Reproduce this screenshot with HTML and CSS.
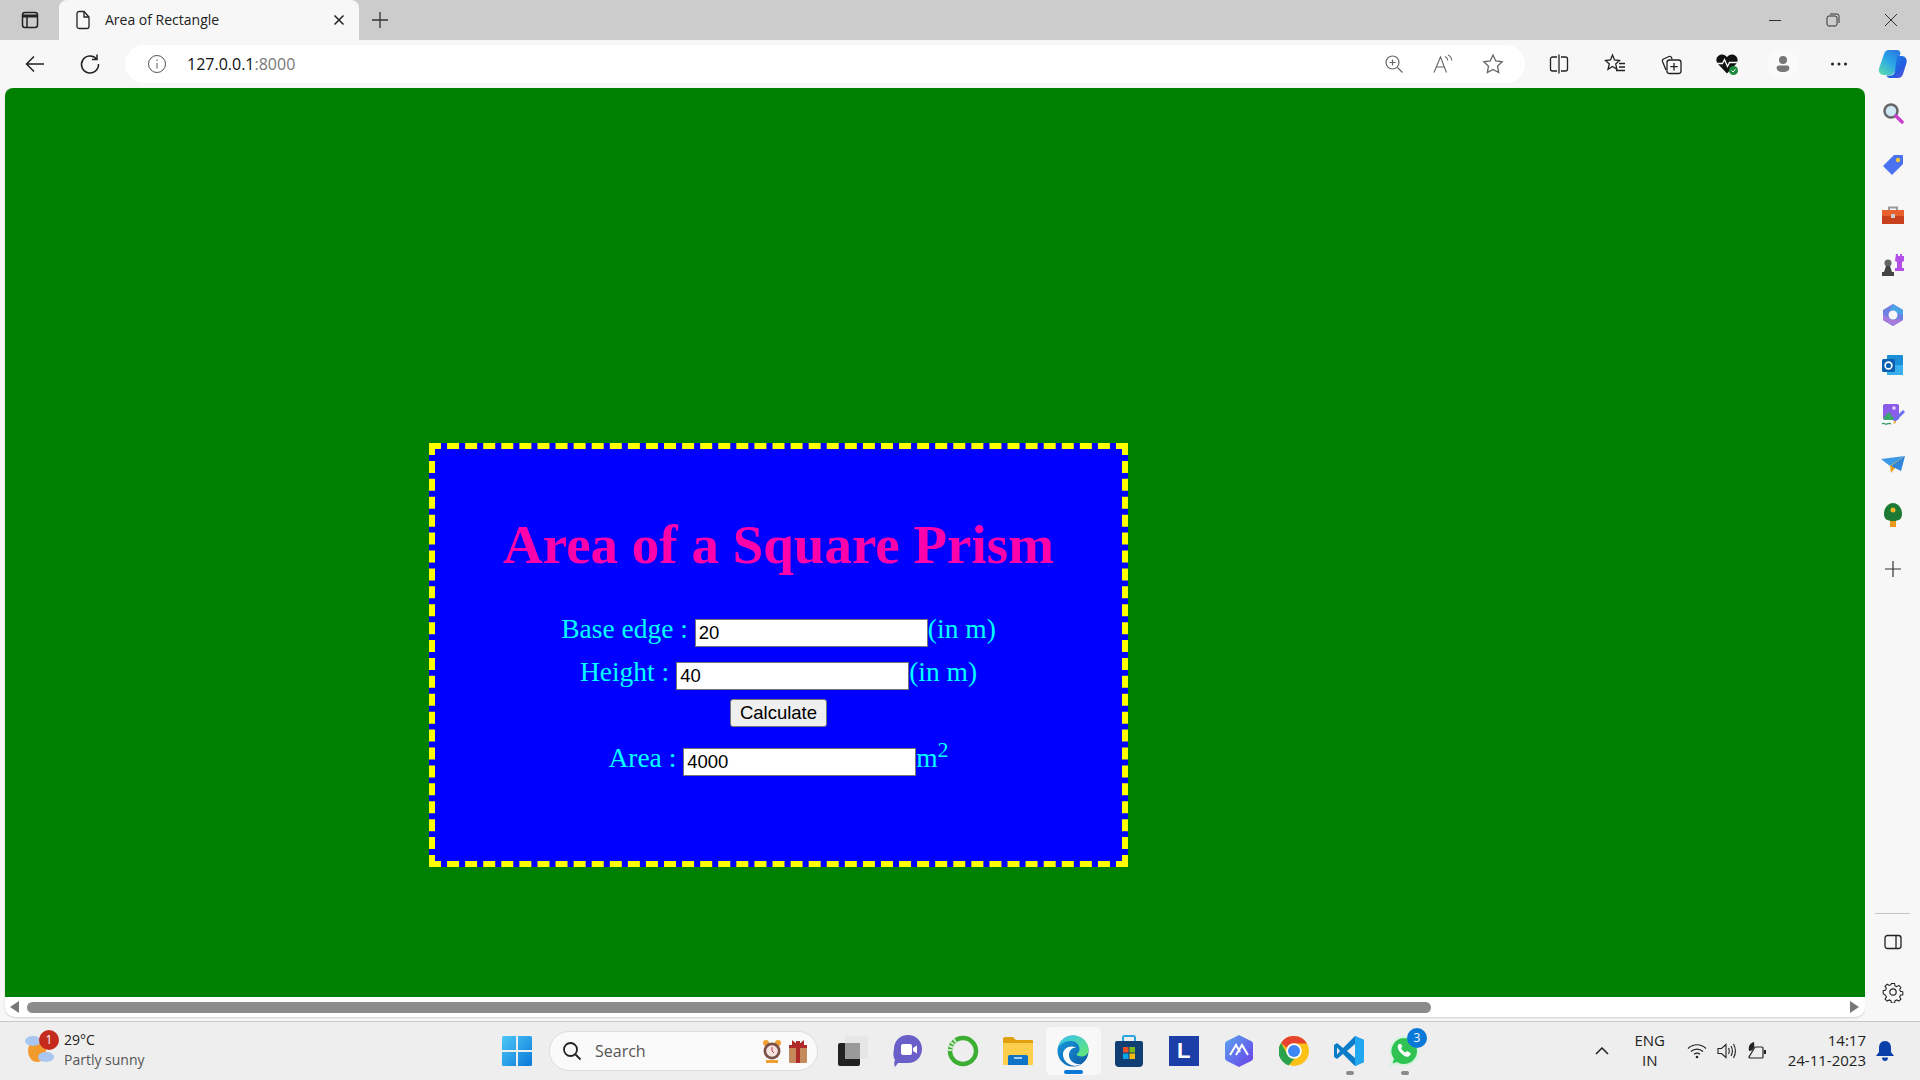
FILE: index.html
```html
<!DOCTYPE html>
<html lang="en">
<head>
    <meta charset="UTF-8">
    <meta name="viewport" content="width=device-width, initial-scale=1.0">
    <title>Area of Rectangle</title>
    <link rel="stylesheet" href="styles.css">
</head>
<body>
    <!-- tab strip -->
    <div class="tabstrip">
        <div class="tab-toggle">
            <svg width="20" height="20" viewBox="0 0 20 20" fill="none" stroke="#222" stroke-width="1.5"><rect x="2.5" y="2.5" width="15" height="15" rx="2.5"/><path d="M2.5 6h15" stroke-width="3"/><path d="M7 6v11"/></svg>
        </div>
        <div class="tab">
            <svg width="16" height="20" viewBox="0 0 16 20" fill="none" stroke="#222" stroke-width="1.3"><path d="M2 3.5a2 2 0 0 1 2-2h5l5 5.5v9.5a2 2 0 0 1-2 2H4a2 2 0 0 1-2-2z"/><path d="M9 1.5V7h5"/></svg>
            <span class="tab-title">Area of Rectangle</span>
            <svg class="tab-close" width="12" height="12" viewBox="0 0 12 12" stroke="#222" stroke-width="1.5"><path d="M1.5 1.5l9 9M10.5 1.5l-9 9"/></svg>
        </div>
        <svg class="tab-new" width="18" height="18" viewBox="0 0 18 18" stroke="#333" stroke-width="1.3"><path d="M9 1v16M1 9h16"/></svg>
        <div class="win-controls">
            <svg width="14" height="14" viewBox="0 0 14 14" stroke="#333"><path d="M1 7.5h12"/></svg>
            <svg width="14" height="14" viewBox="0 0 14 14" fill="none" stroke="#333"><rect x="1" y="3" width="10" height="10" rx="2"/><path d="M4 1h7a2 2 0 0 1 2 2v7"/></svg>
            <svg width="14" height="14" viewBox="0 0 14 14" stroke="#333"><path d="M1 1l12 12M13 1L1 13"/></svg>
        </div>
    </div>

    <!-- address bar and toolbar -->
    <div class="toolbar">
        <svg class="nav-back" width="22" height="22" viewBox="0 0 22 22" fill="none" stroke="#222" stroke-width="1.5"><path d="M20 11H3M10 3.5L2.5 11l7.5 7.5"/></svg>
        <svg class="nav-reload" width="22" height="22" viewBox="0 0 22 22" fill="none" stroke="#222" stroke-width="1.5"><path d="M17.5 6A8.5 8.5 0 1 0 19.5 11"/><path d="M18 1.500V6.500h-5"/></svg>
        <div class="address">
            <svg class="addr-info" width="20" height="20" viewBox="0 0 20 20" fill="none" stroke="#555" stroke-width="1"><circle cx="10" cy="10" r="8.5"/><path d="M10 9v5.5M10 5.5V7"/></svg>
            <span class="url">127.0.0.1<span class="url-port">:8000</span></span>
            <div class="addr-icons">
                <svg width="20" height="20" viewBox="0 0 20 20" fill="none" stroke="#666" stroke-width="1.2"><circle cx="8.5" cy="8.5" r="6.5"/><path d="M13.5 13.5l5 5M8.5 5.5v6M5.5 8.5h6"/></svg>
                <svg width="22" height="20" viewBox="0 0 22 20" fill="none" stroke="#666" stroke-width="1.1"><path d="M2 18.5L8.5 3l6 15.5M4.5 13h8"/><path d="M13 2.5c1.500.5 2.500 2 2.800 4M16 1c2 .8 3.500 3 3.800 5.500"/></svg>
                <svg width="22" height="22" viewBox="0 0 22 22" fill="none" stroke="#666" stroke-width="1.3"><path d="M11 2l2.800 6 6.400.8-4.700 4.400 1.200 6.400L11 16.500l-5.700 3.100 1.200-6.400L1.800 8.800 8.200 8z"/></svg>
            </div>
        </div>
        <div class="tool-icons">
            <svg width="20" height="20" viewBox="0 0 20 20" fill="none" stroke="#222" stroke-width="1.3"><path d="M8 3H3.500a2 2 0 0 0-2 2v10a2 2 0 0 0 2 2H8M12 3h4.500a2 2 0 0 1 2 2v10a2 2 0 0 1-2 2H12M10 .5v19"/></svg>
            <svg width="22" height="22" viewBox="0 0 22 22" fill="none" stroke="#222" stroke-width="1.3"><path d="M8.500 2l2 5 5 .5-3.800 3.500 1.200 5.300-4.400-2.800L4 16.300 5.300 11 1.500 7.500l5-.5z"/><path d="M15 10.500h6M15 14h6M12 17.500h9"/></svg>
            <svg width="22" height="22" viewBox="0 0 22 22" fill="none" stroke="#222" stroke-width="1.3"><path d="M6 17L2.500 8.500a2 2 0 0 1 1-2.500L9 3.500a2 2 0 0 1 2.500 1L12 6"/><rect x="7" y="7" width="14" height="13.5" rx="2.5"/><path d="M14 10v7.500M10.300 13.700h7.400"/></svg>
            <svg width="24" height="24" viewBox="0 0 24 24"><path d="M12 21.500L2.500 11.500C-.5 7 3 2.500 7 2.500c2 0 3.800 1 5 2.800 1.200-1.800 3-2.800 5-2.800 4 0 7.500 4.500 4.500 9z" fill="#111"/><path d="M1.500 11.500h6l2-4 3 7 2-4h8" fill="none" stroke="#fff" stroke-width="1.3"/><circle cx="18.5" cy="18.5" r="4.5" fill="#1c8a3c"/><path d="M16.500 18.500l1.500 1.500 2.500-2.800" fill="none" stroke="#fff" stroke-width="1"/></svg>
            <div class="profile">
                <svg width="16" height="18" viewBox="0 0 20 22" fill="#777"><circle cx="10" cy="6" r="5"/><path d="M2 16a3 3 0 0 1 3-3h10a3 3 0 0 1 3 3c0 3-3 5-8 5s-8-2-8-5z"/></svg>
            </div>
            <svg width="18" height="6" viewBox="0 0 18 6" fill="#222"><circle cx="2.5" cy="3" r="1.5"/><circle cx="9" cy="3" r="1.5"/><circle cx="15.500" cy="3" r="1.5"/></svg>
        </div>
        <svg class="copilot" width="30" height="30" viewBox="0 0 30 30">
            <defs>
                <linearGradient id="copA" x1="0" y1="1" x2="0.7" y2="0"><stop offset="0" stop-color="#5fe0a8"/><stop offset="0.6" stop-color="#2aa6e8"/><stop offset="1" stop-color="#2b7de0"/></linearGradient>
                <linearGradient id="copB" x1="0" y1="0" x2="1" y2="1"><stop offset="0" stop-color="#1f8fe8"/><stop offset="0.6" stop-color="#1f5fe0"/><stop offset="1" stop-color="#6a4fe0"/></linearGradient>
            </defs>
            <path d="M11 1h8c2 0 3 1.200 3.500 3L17 22c-.8 2.500-2.500 4-5 4H6c-4 0-6-3-4.800-7L6 5c.8-2.500 2.500-4 5-4z" fill="url(#copA)"/>
            <path d="M19 7h5c3 0 5.500 3 4.500 7l-3.500 11c-.8 2.500-2.500 4-5 4h-8c-2 0-3-1-3.500-2.500h4c2 0 3.500-1 4.200-3z" fill="url(#copB)"/>
        </svg>
    </div>

    <div class="middle">
        <div class="viewport">
            <!-- the page being viewed -->
            <div class="page">
                <div class="card">
                    <h1>Area of a Square Prism</h1>
                    <div class="row">Base edge : <input class="field" type="text" value="20">(in m)</div>
                    <div class="row">Height : <input class="field" type="text" value="40">(in m)</div>
                    <div class="row-btn"><button class="calc">Calculate</button></div>
                    <div class="row">Area : <input class="field" type="text" value="4000">m<sup>2</sup></div>
                </div>
            </div>
            <div class="hscroll">
                <svg width="9" height="12" viewBox="0 0 9 12" fill="#777"><path d="M9 0v12L0 6z"/></svg>
                <div class="hscroll-track"><div class="hscroll-thumb"></div></div>
                <svg width="9" height="12" viewBox="0 0 9 12" fill="#777"><path d="M0 0v12l9-6z"/></svg>
            </div>
        </div>

        <div class="sidebar">
            <div class="side-icons">
                <svg width="22" height="22" viewBox="0 0 22 22"><circle cx="9" cy="9" r="6.5" fill="#cfe6f5" stroke="#666" stroke-width="2.5"/><path d="M14 14l6 6" stroke="#c93fd0" stroke-width="3.5" stroke-linecap="round"/></svg>
                <svg width="22" height="22" viewBox="0 0 22 22"><path d="M12 1h8a1 1 0 0 1 1 1v8L10 21 1 12z" fill="#4a72f0"/><circle cx="16" cy="6" r="2.2" fill="#f3c43a"/></svg>
                <svg width="24" height="20" viewBox="0 0 24 20"><path d="M8 5V2.500h8V5" fill="none" stroke="#9a9a9a" stroke-width="2"/><rect x="1" y="5" width="22" height="6" fill="#e8602c"/><rect x="1" y="11" width="22" height="8" fill="#c8401c"/><rect x="10" y="9" width="4" height="4" fill="#ccc"/></svg>
                <svg width="24" height="24" viewBox="0 0 24 24"><path d="M15 1h2v2h2V1h2v2h2v5l-2 1v6h2v3h-9v-3h2V9l-2-1z" fill="#b44fe8"/><circle cx="7" cy="10" r="3.5" fill="#666"/><path d="M5 13h4l2 6h2v4H1v-4h2z" fill="#444"/></svg>
                <svg width="22" height="24" viewBox="0 0 22 24"><path d="M11 1l10 6v10l-10 6-10-6V7z" fill="#6d7fe0"/><path d="M11 1l10 6v5l-6-2a6 6 0 0 0-8-2z" fill="#4ba3e8"/><path d="M1 12l6 3a6 6 0 0 0 8 1l6 1-10 6-10-6z" fill="#a77bdc"/><circle cx="11" cy="12" r="4.5" fill="#f7f7f7"/></svg>
                <svg width="22" height="22" viewBox="0 0 22 22"><rect x="5" y="1" width="16" height="20" rx="1" fill="#1a8fd8"/><path d="M5 11h16v10H5z" fill="#38b0ee"/><rect x="0" y="5" width="13" height="13" rx="1.5" fill="#0a60b0"/><circle cx="6.5" cy="11.5" r="3.4" fill="none" stroke="#fff" stroke-width="1.6"/></svg>
                <svg width="24" height="24" viewBox="0 0 24 24"><rect x="2" y="1" width="16" height="16" rx="2" fill="#8a5ce8"/><path d="M2 15l6-6 6 8H4z" fill="#3aa86a"/><circle cx="13" cy="5" r="1.8" fill="#e8d8ff"/><path d="M23 8L13 18" stroke="#6a6cf0" stroke-width="3"/><path d="M14 17l-2 4 3-1z" fill="#f0b429"/><path d="M1 21c2-2 3 1 5 0s2-1 4 0" fill="none" stroke="#2e9a66" stroke-width="1.3"/></svg>
                <svg width="24" height="18" viewBox="0 0 24 18"><path d="M0 3L24 0 9 10z" fill="#3b9ae8"/><path d="M24 0L9 10l1 7z" fill="#f0a020"/><path d="M24 0L20 15 10 10z" fill="#2f86dc"/></svg>
                <svg width="20" height="24" viewBox="0 0 20 24"><rect x="7" y="17" width="6" height="7" fill="#e89a1c"/><path d="M10 0c5 0 9 5 9 11 0 5-3 7-9 7s-9-2-9-7C1 5 5 0 10 0z" fill="#1d7a34"/><circle cx="10" cy="7" r="2.5" fill="#f0b429"/></svg>
                <svg width="16" height="16" viewBox="0 0 16 16" stroke="#333" stroke-width="1.2"><path d="M8 0v16M0 8h16"/></svg>
            </div>
            <div class="side-bottom">
                <div class="side-line"></div>
                <svg width="18" height="16" viewBox="0 0 18 16" fill="none" stroke="#222" stroke-width="1.3"><rect x="1" y="1.5" width="16" height="13" rx="2.5"/><path d="M12 1.500v13"/></svg>
                <svg width="22" height="22" viewBox="0 0 22 22" fill="none" stroke="#222" stroke-width="1.2"><circle cx="11" cy="11" r="3.2"/><path d="M9.300 1.500h3.400l.6 2.700 1.800.8 2.400-1.400 2.300 2.400-1.400 2.300.8 1.900 2.700.6v3.300l-2.700.6-.8 1.800 1.400 2.400-2.300 2.300-2.400-1.400-1.800.8-.6 2.700H9.300l-.6-2.700-1.800-.8-2.400 1.400-2.300-2.300 1.400-2.400-.8-1.800L.1 12.800V9.500l2.700-.6.800-1.900-1.400-2.300 2.300-2.400 2.400 1.400 1.800-.8z" transform="translate(1.1 1.1) scale(.9)"/></svg>
            </div>
        </div>
    </div>

    <!-- windows taskbar -->
    <div class="taskbar">
        <div class="weather">
            <div class="weather-icon">
                <svg width="34" height="36" viewBox="0 0 34 36"><ellipse cx="13" cy="18" rx="9" ry="11" fill="#f39a2c"/><ellipse cx="9" cy="8" rx="8" ry="5" fill="#a9c6ee"/><ellipse cx="22" cy="24" rx="8" ry="5" fill="#a9c6ee"/></svg>
                <span class="weather-badge">1</span>
            </div>
            <div class="weather-text">
                <div class="temp">29°C</div>
                <div class="cond">Partly sunny</div>
            </div>
        </div>
        <div class="task-center">
            <svg class="win-logo" width="30" height="30" viewBox="0 0 30 30">
                <defs><linearGradient id="winG" x1="0" y1="0" x2="1" y2="1"><stop offset="0" stop-color="#4dc8f8"/><stop offset="1" stop-color="#0a78d8"/></linearGradient></defs>
                <path d="M0 1.500A1.500 1.500 0 0 1 1.500 0H14v14H0zM16 0h12.500A1.500 1.500 0 0 1 30 1.500V14H16zM0 16h14v14H1.500A1.500 1.500 0 0 1 0 28.500zM16 16h14v12.500a1.500 1.500 0 0 1-1.500 1.500H16z" fill="url(#winG)"/>
            </svg>
            <div class="search">
                <svg width="20" height="20" viewBox="0 0 20 20" fill="none" stroke="#222" stroke-width="1.8"><circle cx="8.5" cy="8.5" r="6.5"/><path d="M13.5 13.5l5 5"/></svg>
                <span class="search-text">Search</span>
                <div class="search-art">
                    <svg width="20" height="24" viewBox="0 0 20 24"><circle cx="4" cy="4" r="3" fill="#f0a030"/><circle cx="16" cy="4" r="3" fill="#f0a030"/><circle cx="10" cy="12" r="8.5" fill="#7a5248"/><circle cx="10" cy="12" r="5.8" fill="#f3e4e0"/><path d="M10 8v4l2 2" stroke="#c0304a" fill="none"/><path d="M4 21h12v3H4z" fill="#f0a030"/></svg>
                    <svg width="20" height="24" viewBox="0 0 20 24"><rect x="1" y="6" width="18" height="18" rx="1" fill="#c48a5c"/><rect x="8" y="2" width="4" height="22" fill="#b02a2a"/><path d="M1 6h18v3H1zM4 1l6 5 6-5v5H4z" fill="#b02a2a"/></svg>
                </div>
            </div>
            <div class="task-icons">
                <div class="task-item">
                    <svg width="32" height="32" viewBox="0 0 32 32"><rect x="1" y="8" width="22" height="23" rx="2" fill="#222"/><rect x="8" y="1" width="23" height="23" rx="2" fill="#e4e4e4" fill-opacity=".85"/><rect x="8" y="8" width="15" height="16" fill="#9a9a9a"/></svg>
                </div>
                <div class="task-item">
                    <svg width="30" height="34" viewBox="0 0 30 34"><path d="M15 1c8 0 14 6 14 14s-6 14-14 14H5l-3 4c-1-2-1-5 0-7C0 23 0 19 1 15 1 7 7 1 15 1z" fill="#6a5fc8"/><rect x="8" y="10" width="11" height="11" rx="2" fill="#fff"/><path d="M20 14l4-2.500v8L20 17z" fill="#fff"/></svg>
                </div>
                <div class="task-item">
                    <svg width="32" height="32" viewBox="0 0 32 32" fill="none"><circle cx="16" cy="16" r="13" stroke="#3cae32" stroke-width="4.5"/><path d="M3 16a13 13 0 0 1 7-11.500" stroke="#cfe8c8" stroke-width="4.5" stroke-dasharray="2 1.5"/></svg>
                </div>
                <div class="task-item">
                    <svg width="32" height="30" viewBox="0 0 32 30"><path d="M1 3a2 2 0 0 1 2-2h8l3 3h16a1 1 0 0 1 1 1v3H1z" fill="#e0a010"/><path d="M1 7h30v21a1 1 0 0 1-1 1H2a1 1 0 0 1-1-1z" fill="#fbcf4c"/><path d="M6 21a2 2 0 0 1 2-2h16a2 2 0 0 1 2 2v8H6z" fill="#0d74c8"/><path d="M12 22h8" stroke="#d8ecf8" stroke-width="1.5"/></svg>
                </div>
                <div class="task-item task-active">
                    <svg width="32" height="32" viewBox="0 0 32 32">
                        <defs>
                            <linearGradient id="edgeA" x1="0" y1="0" x2="1" y2="1"><stop offset="0" stop-color="#1a9be0"/><stop offset="1" stop-color="#0c59a4"/></linearGradient>
                            <linearGradient id="edgeB" x1="0" y1="0" x2="1" y2="1"><stop offset="0" stop-color="#35c1f1"/><stop offset="1" stop-color="#66eb6e"/></linearGradient>
                        </defs>
                        <circle cx="16" cy="16" r="15.5" fill="url(#edgeA)"/>
                        <path d="M1 13C3 5 9 .5 16 .5 25 .5 31.500 7 31.500 15c0 4-3 6.500-7 6.500-3 0-5-1-5-2.500 2-1 3-2.500 3-5C22.500 9 18 5.500 13 6 7 6.500 3 9 1 13z" fill="url(#edgeB)"/>
                        <path d="M12 20c0-4.500 3-7.500 7-7.500-6-3-13 .5-13 7 0 5 4 10 10 11 3 .5 6 0 8-1.500-6 1-12-3-12-9z" fill="#fff"/>
                    </svg>
                    <span class="task-bar"></span>
                </div>
                <div class="task-item">
                    <svg width="30" height="32" viewBox="0 0 30 32"><path d="M9 7V2.500A1.500 1.500 0 0 1 10.500 1h9A1.500 1.500 0 0 1 21 2.500V7" fill="none" stroke="#2aa6e0" stroke-width="2"/><path d="M1 8a2 2 0 0 1 2-2h24a2 2 0 0 1 2 2v20a4 4 0 0 1-4 4H5a4 4 0 0 1-4-4z" fill="#123f73"/><rect x="9" y="12" width="5.5" height="5.5" fill="#ea4e26"/><rect x="15.5" y="12" width="5.5" height="5.5" fill="#7eb91c"/><rect x="9" y="18.5" width="5.5" height="5.5" fill="#0aa4e8"/><rect x="15.5" y="18.5" width="5.5" height="5.5" fill="#fbb90a"/></svg>
                </div>
                <div class="task-item">
                    <div class="l-tile">L</div>
                </div>
                <div class="task-item">
                    <svg width="28" height="32" viewBox="0 0 28 32"><defs><linearGradient id="arcG" x1="0" y1="0" x2="1" y2="1"><stop offset="0" stop-color="#5aa6f0"/><stop offset="1" stop-color="#6a3de8"/></linearGradient></defs><path d="M14 0l12 6a3 3 0 0 1 2 3v14a3 3 0 0 1-2 3l-12 6-12-6a3 3 0 0 1-2-3V9a3 3 0 0 1 2-3z" fill="url(#arcG)"/><path d="M5 20l6-10 4 7M11 20l6-10 6 10" fill="none" stroke="#fff" stroke-width="2"/></svg>
                </div>
                <div class="task-item">
                    <svg width="30" height="30" viewBox="0 0 30 30"><circle cx="15" cy="15" r="15" fill="#fbc116"/><path d="M15 0a15 15 0 0 1 13 7.500H15a7.500 7.500 0 0 0-7 4.500L2 7A15 15 0 0 1 15 0z" fill="#e8432e"/><path d="M2 7l6.500 11.500a7.500 7.500 0 0 0 7 4L9.500 29.500A15 15 0 0 1 2 7z" fill="#2ba24c"/><circle cx="15" cy="15" r="7.8" fill="#fff"/><circle cx="15" cy="15" r="6" fill="#3f86f5"/></svg>
                </div>
                <div class="task-item">
                    <svg width="30" height="30" viewBox="0 0 30 30"><path d="M21 0l9 4v22l-9 4L9 18l-6 5-3-2v-12l3-2 6 5z" fill="#0a7cc8"/><path d="M21 0l9 4v22l-9 4z" fill="#22a8f0"/><path d="M21 8v14l-8-7z" fill="#eee"/><path d="M3 11.500L6 15l-3 3.500z" fill="#eee"/></svg>
                    <span class="task-dot"></span>
                </div>
                <div class="task-item">
                    <svg width="30" height="30" viewBox="0 0 30 30"><path d="M15 1a14 14 0 0 1 0 28c-2.500 0-5-.7-7-2l-6 2 2-6A14 14 0 0 1 15 1z" fill="#30c354" stroke="#d4f3dc" stroke-width="2"/><path d="M10 8c-2 1.500-1.500 5 1.500 8.500s6 5 8 4 2.500-3 2-3.500l-3.500-2-1.500 1.500c-2-.8-4-3-4.500-4.500l1.500-1.500L12 8z" fill="#fff"/></svg>
                    <span class="task-dot"></span>
                    <span class="task-badge">3</span>
                </div>
            </div>
        </div>
        <div class="tray">
            <svg class="tray-up" width="14" height="8" viewBox="0 0 14 8" fill="none" stroke="#222" stroke-width="1.5"><path d="M1 7l6-6 6 6"/></svg>
            <div class="lang">ENG<br>IN</div>
            <div class="tray-icons">
                <svg width="20" height="16" viewBox="0 0 20 16" fill="none" stroke="#222" stroke-width="1.2"><path d="M1 5.500c5-5 13-5 18 0M4 8.500c3.500-3.200 8.500-3.200 12 0M7 11.300c2-1.600 4-1.600 6 0"/><circle cx="10" cy="14" r="1.3" fill="#222" stroke="none"/></svg>
                <svg width="20" height="18" viewBox="0 0 20 18" fill="none" stroke="#222" stroke-width="1.1"><path d="M1 6.500h3.500L9 2.500v13l-4.500-4H1z"/><path d="M11.500 6c1 2 1 4 0 6M14 4c1.700 3 1.700 7 0 10M16.500 2c2.500 4.500 2.500 9.500 0 14"/></svg>
                <svg width="20" height="18" viewBox="0 0 20 18"><path d="M6 16H3a1 1 0 0 1-1-1l6-10h7a1 1 0 0 1 1 1v9a1 1 0 0 1-1 1z" fill="none" stroke="#222" stroke-width="1.2"/><path d="M17 8h2v4h-2z" fill="#222"/><path d="M7 0C3 1 1 4 2 9c4 0 6-3 5-9z" fill="#222"/></svg>
            </div>
            <div class="clock">14:17<br>24-11-2023</div>
            <svg class="bell" width="18" height="20" viewBox="0 0 18 20" fill="#0a3ea8"><path d="M9 0c4 0 6 3 6 7v4l3 4H0l3-4V7c0-4 2-7 6-7z"/><path d="M6 16.500h6c0 2-1 3.500-3 3.500s-3-1.500-3-3.500z"/></svg>
        </div>
    </div>
</body>
</html>
```

FILE: styles.css
```css
* {
    box-sizing: border-box;
}
html, body {
    margin: 0;
    padding: 0;
}
body {
    width: 1920px;
    height: 1080px;
    overflow: hidden;
    display: flex;
    flex-direction: column;
    background: #f7f7f7;
    font-family: "Open Sans", "Noto Sans", sans-serif;
    color: #222;
}
svg {
    display: block;
    flex: none;
}

/* tab strip */
.tabstrip {
    height: 40px;
    flex: none;
    display: flex;
    align-items: center;
    background: #cccccc;
    padding-left: 20px;
}
.tab-toggle {
    width: 39px;
}
.tab {
    width: 300px;
    height: 40px;
    display: flex;
    align-items: center;
    background: #f7f7f7;
    border-radius: 8px 8px 0 0;
    padding-left: 16px;
}
.tab-title {
    margin-left: 14px;
    padding-bottom: 2px;
    font-size: 14px;
    white-space: nowrap;
}
.tab-close {
    margin-left: auto;
    margin-right: 14px;
}
.tab-new {
    margin-left: 12px;
}
.win-controls {
    margin-left: auto;
    display: flex;
    gap: 44px;
    padding-right: 22px;
}

/* toolbar */
.toolbar {
    height: 48px;
    flex: none;
    display: flex;
    align-items: center;
    background: #f7f7f7;
    padding-left: 24px;
}
.nav-reload {
    margin-left: 33px;
}
.address {
    width: 1400px;
    height: 38px;
    margin-left: 24px;
    display: flex;
    align-items: center;
    background: #ffffff;
    border-radius: 19px;
    padding-left: 22px;
}
.url {
    margin-left: 20px;
    font-size: 16px;
    color: #111;
}
.url-port {
    color: #777;
}
.addr-icons {
    margin-left: auto;
    display: flex;
    align-items: center;
    gap: 28px;
    padding-right: 21px;
}
.tool-icons {
    padding-left: 6px;
    display: grid;
    grid-template-columns: repeat(6, 56px);
    align-items: center;
    justify-items: center;
}
.profile {
    width: 30px;
    height: 30px;
    border-radius: 50%;
    background: #fafafa;
    display: flex;
    align-items: center;
    justify-content: center;
}
.copilot {
    margin-left: 11px;
}

/* browser content */
.middle {
    height: 933px;
    flex: none;
    display: flex;
}
.viewport {
    width: 1860px;
    height: 929px;
    margin-left: 5px;
    display: flex;
    flex-direction: column;
    border-radius: 8px 8px 10px 10px;
    overflow: hidden;
    background: #ffffff;
    box-shadow: 0 1px 2px rgba(0, 0, 0, 0.15);
}
.page {
    height: 909px;
    flex: none;
    background: #008000;
    padding: 355px 0 0 424px;
    font-family: "Liberation Serif", "Times New Roman", serif;
}
.card {
    width: 699px;
    height: 424px;
    border: 6px dashed #ffff00;
    background: #0000ff;
    text-align: center;
    color: #00ffff;
    font-size: 27.5px;
}
h1 {
    margin: 0;
    padding-top: 64px;
    height: 163.5px;
    font-size: 55px;
    line-height: 64px;
    color: #ff00aa;
}
.row {
    height: 43px;
    padding-top: 2.5px;
    line-height: 28px;
    white-space: nowrap;
}
.row sup {
    font-size: 22px;
    line-height: 0;
}
.field {
    width: 233px;
    height: 28px;
    padding: 1px 3px;
    vertical-align: -0.5px;
    border: 1px solid #767676;
    background: #ffffff;
    color: #000000;
    font-family: "Liberation Sans", Arial, sans-serif;
    font-size: 18.5px;
}
.row-btn {
    height: 48px;
    margin-top: -5px;
}
.calc {
    width: 97px;
    height: 28px;
    padding: 0;
    border: 1px solid #767676;
    border-radius: 3px;
    background: #efefef;
    color: #000000;
    font-family: "Liberation Sans", Arial, sans-serif;
    font-size: 18.5px;
}
.hscroll {
    flex: 1;
    display: flex;
    align-items: center;
    padding: 0 6px 0 5px;
    gap: 8px;
}
.hscroll-track {
    flex: 1;
}
.hscroll-thumb {
    width: 1404px;
    height: 11px;
    border-radius: 6px;
    background: #8b8b8b;
}

/* edge sidebar */
.sidebar {
    flex: 1;
    height: 933px;
    display: flex;
    flex-direction: column;
    align-items: center;
    justify-content: space-between;
    background: #f7f7f7;
}
.side-icons {
    display: flex;
    flex-direction: column;
    align-items: center;
}
/* taller box than the drawing keeps each icon centred in a 50px slot */
.side-icons svg {
    height: 50px;
}
.side-icons svg:first-child {
    margin-bottom: 2px;
}
.side-icons svg:last-child {
    margin-top: 4px;
}
.side-bottom {
    display: flex;
    flex-direction: column;
    align-items: center;
    gap: 31px;
    padding-bottom: 18px;
}
.side-line {
    width: 35px;
    height: 1px;
    background: #c4c4c4;
    margin-bottom: -11px;
}

/* taskbar */
.taskbar {
    height: 59px;
    flex: none;
    display: flex;
    align-items: center;
    background: #eeeeee;
    border-top: 1px solid #c8c8c8;
}
.weather {
    width: 502px;
    display: flex;
    align-items: center;
    padding-left: 24px;
}
.weather-icon {
    width: 34px;
    height: 36px;
    position: relative;
}
.weather-badge {
    position: absolute;
    left: 15px;
    top: -3px;
    width: 20px;
    height: 20px;
    border-radius: 50%;
    background: #c42b1c;
    color: #fff;
    font-size: 12px;
    line-height: 20px;
    text-align: center;
}
.weather-text {
    margin-left: 6px;
    margin-top: -2px;
    font-size: 14px;
    line-height: 20px;
}
.cond {
    color: #555;
}
.task-center {
    display: flex;
    align-items: center;
}
.search {
    width: 269px;
    height: 40px;
    margin-left: 17px;
    display: flex;
    align-items: center;
    background: #fafafa;
    border: 1px solid #dddddd;
    border-radius: 20px;
    padding-left: 12px;
}
.search-text {
    margin-left: 13px;
    font-size: 16px;
    color: #555;
}
.search-art {
    margin-left: auto;
    display: flex;
    gap: 6px;
    padding-right: 9px;
}
.task-icons {
    display: flex;
    align-items: center;
    margin-left: 7px;
}
.task-item {
    width: 55.2px;
    height: 48px;
    display: flex;
    align-items: center;
    justify-content: center;
    position: relative;
}
.task-active {
    background: #f8f8f8;
    border-radius: 5px;
}
.task-bar {
    position: absolute;
    left: 18px;
    bottom: 1px;
    width: 19px;
    height: 4px;
    border-radius: 2px;
    background: #0a78d8;
}
.task-dot {
    position: absolute;
    left: 24px;
    bottom: 0;
    width: 8px;
    height: 4px;
    border-radius: 2px;
    background: #8a8a8a;
}
.task-badge {
    position: absolute;
    left: 30px;
    top: 1px;
    width: 20px;
    height: 20px;
    border-radius: 50%;
    background: #0a78d8;
    color: #fff;
    font-size: 12px;
    line-height: 20px;
    text-align: center;
}
.l-tile {
    width: 30px;
    height: 30px;
    background: #1c3ea8;
    color: #fff;
    font-family: "Liberation Sans", Arial, sans-serif;
    font-weight: bold;
    font-size: 22px;
    line-height: 30px;
    text-align: center;
}
.tray {
    margin-left: auto;
    display: flex;
    align-items: center;
    padding-right: 26px;
}
.lang {
    margin-left: 21px;
    margin-top: -2px;
    width: 40px;
    text-align: center;
    font-size: 15px;
    line-height: 20px;
}
.tray-icons {
    margin-left: 17px;
    display: flex;
    align-items: center;
    gap: 10px;
}
.clock {
    margin-left: 21px;
    margin-top: -2px;
    font-size: 15px;
    line-height: 20px;
    text-align: right;
}
.bell {
    margin-left: 10px;
}
```
